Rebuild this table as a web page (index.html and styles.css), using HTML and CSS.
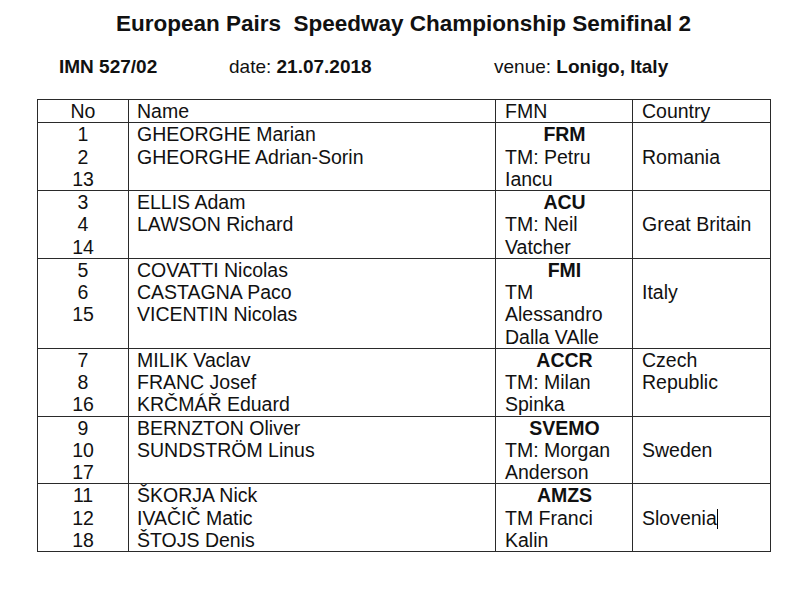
FILE: index.html
```html
<!DOCTYPE html>
<html lang="en">
<head>
<meta charset="utf-8">
<title>European Pairs Speedway Championship Semifinal 2</title>
<link rel="stylesheet" href="styles.css">
</head>
<body>
<div class="page">
  <h1 class="title">European Pairs&nbsp; Speedway Championship Semifinal 2</h1>
  <div class="info">
    <div class="info-item"><b>IMN 527/02</b></div>
    <div class="info-item">date: <b>21.07.2018</b></div>
    <div class="info-item">venue: <b>Lonigo, Italy</b></div>
  </div>
  <table class="list">
    <colgroup>
      <col class="c-no"><col class="c-name"><col class="c-fmn"><col class="c-country">
    </colgroup>
    <thead>
      <tr>
        <th class="no">No</th>
        <th class="name">Name</th>
        <th class="fmn">FMN</th>
        <th class="country">Country</th>
      </tr>
    </thead>
    <tbody>
      <tr>
        <td class="no"><div>1</div><div>2</div><div>13</div></td>
        <td class="name"><div>GHEORGHE Marian</div><div>GHEORGHE Adrian-Sorin</div></td>
        <td class="fmn"><div class="code">FRM</div><div>TM: Petru</div><div>Iancu</div></td>
        <td class="country"><div class="skip">Romania</div></td>
      </tr>
      <tr>
        <td class="no"><div>3</div><div>4</div><div>14</div></td>
        <td class="name"><div>ELLIS Adam</div><div>LAWSON Richard</div></td>
        <td class="fmn"><div class="code">ACU</div><div>TM: Neil</div><div>Vatcher</div></td>
        <td class="country"><div class="skip">Great Britain</div></td>
      </tr>
      <tr>
        <td class="no"><div>5</div><div>6</div><div>15</div></td>
        <td class="name"><div>COVATTI Nicolas</div><div>CASTAGNA Paco</div><div>VICENTIN Nicolas</div></td>
        <td class="fmn"><div class="code">FMI</div><div>TM</div><div>Alessandro</div><div>Dalla VAlle</div></td>
        <td class="country"><div class="skip">Italy</div></td>
      </tr>
      <tr>
        <td class="no"><div>7</div><div>8</div><div>16</div></td>
        <td class="name"><div>MILIK Vaclav</div><div>FRANC Josef</div><div>KRČMÁŘ Eduard</div></td>
        <td class="fmn"><div class="code">ACCR</div><div>TM: Milan</div><div>Spinka</div></td>
        <td class="country"><div>Czech</div><div>Republic</div></td>
      </tr>
      <tr>
        <td class="no"><div>9</div><div>10</div><div>17</div></td>
        <td class="name"><div>BERNZTON Oliver</div><div>SUNDSTRÖM Linus</div></td>
        <td class="fmn"><div class="code">SVEMO</div><div>TM: Morgan</div><div>Anderson</div></td>
        <td class="country"><div class="skip">Sweden</div></td>
      </tr>
      <tr>
        <td class="no"><div>11</div><div>12</div><div>18</div></td>
        <td class="name"><div>ŠKORJA Nick</div><div>IVAČIČ Matic</div><div>ŠTOJS Denis</div></td>
        <td class="fmn"><div class="code">AMZS</div><div>TM Franci</div><div>Kalin</div></td>
        <td class="country"><div class="skip">Slovenia<span class="caret"></span></div></td>
      </tr>
    </tbody>
  </table>
</div>
</body>
</html>
```

FILE: styles.css
```css
html, body {
  margin: 0;
  padding: 0;
  background: #ffffff;
}

body {
  font-family: "Liberation Sans", Arial, sans-serif;
  color: #111111;
}

.page {
  width: 800px;
  height: 600px;
  padding-top: 10px;
  box-sizing: border-box;
}

.title {
  margin: 0 0 0 7px;
  font-size: 22.5px;
  line-height: 27px;
  font-weight: bold;
  text-align: center;
}

.info {
  display: grid;
  grid-template-columns: 170px 265px auto;
  padding-left: 59px;
  margin-top: 19px;
  font-size: 19px;
  line-height: 22px;
}

.info b {
  font-weight: bold;
}

.list {
  margin: 21px 0 0 37px;
  width: 733px;
  border-collapse: collapse;
  table-layout: fixed;
  font-size: 19.5px;
  line-height: 22.25px;
}

.c-no { width: 91px; }
.c-name { width: 367px; }
.c-fmn { width: 137px; }
.c-country { width: 138px; }

.list th,
.list td {
  border: 1px solid #2a2a2a;
  padding: 0 8px;
  vertical-align: top;
  text-align: left;
  font-weight: normal;
}

.list th.no,
.list td.no {
  text-align: center;
  padding: 0;
}

.list td.fmn,
.list th.fmn {
  padding-left: 9px;
}

.list td.country,
.list th.country {
  padding-left: 9px;
}

.code {
  font-weight: bold;
  text-align: center;
}

.skip {
  padding-top: 22.25px;
}

.caret {
  display: inline-block;
  width: 1px;
  height: 20px;
  background: #000;
  vertical-align: -4px;
}
```
